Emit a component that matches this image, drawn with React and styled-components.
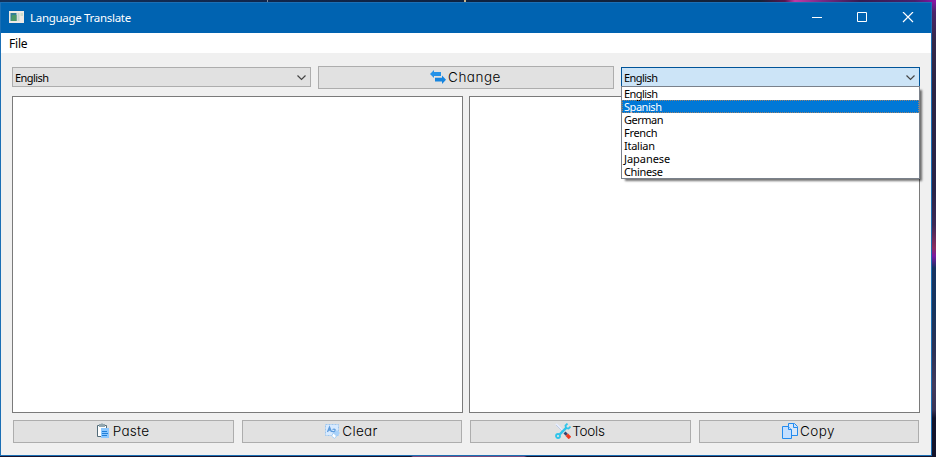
import React from "react";
import styled, { createGlobalStyle } from "styled-components";

const GlobalStyle = createGlobalStyle`
  *, *::before, *::after { box-sizing: border-box; }
  body { margin: 0; overflow: hidden; }
`;

const Desktop = styled.div`
  width: 936px;
  height: 457px;
  padding: 2px 4px 1px 0;
  background:
    linear-gradient(#c9b68a, #c9b68a) 464px 0 / 2px 2px no-repeat,
    linear-gradient(#7e8797, #7e8797) 267px 0 / 1px 2px no-repeat,
    linear-gradient(90deg, #12315b 0, #10264c 260px, #0e2240 480px, #142238 760px, #57154f 785px, #c23aa5 795px, #7a2a86 822px, #351b50 860px, #47206b 915px, #8c12a8 936px) 0 0 / 936px 2px no-repeat,
    linear-gradient(90deg, #17102a 0, #17102a 411px, #7a4878 413px, #7a4878 524px, #17102a 527px, #141127 936px) 0 456px / 936px 1px no-repeat,
    linear-gradient(#8d14ab 0, #4c246b 12px, #34294a 40px, #2b2444 90px, #282347 190px, #3d2855 225px, #8c2d60 248px, #7b19a2 256px, #173260 268px, #16345d 310px, #2b3155 350px, #413a5c 385px, #3a3456 410px, #12132b 418px, #15142b 457px) 932px 0 / 4px 457px no-repeat,
    #17102a;
`;

const Window = styled.main`
  width: 932px;
  height: 454px;
  display: flex;
  flex-direction: column;
  border: 1px solid #1b6fb5;
  background: #f0f0f0;
  color: #000;
`;

const TitleBar = styled.header`
  height: 30px;
  flex: none;
  display: flex;
  align-items: center;
  padding: 0 17px 0 8px;
  background: #0063b1;
  color: #fff;
  > svg { margin-bottom: 2px; }
`;

const Title = styled.h1`
  flex: 1;
  margin: 0 0 0 6px;
  font: 400 11.5px/16px "Noto Sans", sans-serif;
  letter-spacing: -0.3px;
`;

const WindowControls = styled.div`
  display: flex;
  gap: 34px;
`;

const ControlButton = styled.button`
  width: 12px;
  height: 12px;
  padding: 0;
  border: 0;
  background: none;
  color: inherit;
  svg { display: block; }
`;

const MenuBar = styled.nav`
  height: 20px;
  flex: none;
  padding: 0 8px;
  background: #fff;
  font: 400 12px/21px "Noto Sans", sans-serif;
  letter-spacing: -0.2px;
`;

const Content = styled.div`
  flex: 1;
  display: flex;
  flex-direction: column;
  padding: 13px 11px 12px;
`;

const LanguageRow = styled.div`
  display: grid;
  grid-template-columns: 299px 296px 299px;
  column-gap: 7px;
  align-items: start;
  height: 23px;
`;

const Combo = styled.div`
  position: relative;
  height: 20px;
  margin-top: 1px;
  display: flex;
  align-items: center;
  justify-content: space-between;
  padding: 0 4px 0 2px;
  border: 1px solid ${(p) => (p.$open ? "#005499" : "#adadad")};
  background: ${(p) => (p.$open ? "#cce4f7" : "#e1e1e1")};
  font: 400 11px/13px "Noto Sans", sans-serif;
  letter-spacing: -0.55px;
  > svg { margin-top: 2px; }
`;

const Options = styled.ul`
  position: absolute;
  z-index: 1;
  top: 18px;
  left: -1px;
  width: 299px;
  margin: 0;
  padding: 0;
  border: 1px solid #7a818b;
  background: #fff;
  box-shadow: 3px 3px 2px -1px rgba(0, 0, 0, 0.55);
  list-style: none;
`;

const Option = styled.li`
  height: 13px;
  padding-left: 2px;
  line-height: 13px;
  letter-spacing: ${(p) => p.$spacing}px;
  color: ${(p) => (p.$selected ? "#fff" : "#000")};
  background: ${(p) => (p.$selected ? "#0078d7" : "#fff")};
  outline: ${(p) => (p.$selected ? "1px dotted rgba(255, 135, 40, 0.6)" : "none")};
  outline-offset: -1px;
`;

const Panes = styled.div`
  flex: none;
  display: grid;
  grid-template-columns: 451px 451px;
  column-gap: 6px;
  height: 317px;
  margin-top: 7px;
`;

const TextPane = styled.textarea`
  display: block;
  width: 100%;
  height: 100%;
  border: 1px solid #7a7a7a;
  border-radius: 0;
  background: #fff;
  resize: none;
  outline: none;
`;

const Actions = styled.div`
  display: grid;
  grid-template-columns: 221px 220px 221px 220px;
  column-gap: 8px;
  margin: 7px 0 0 1px;
`;

const Button = styled.button`
  height: 23px;
  display: flex;
  align-items: center;
  justify-content: center;
  gap: ${(p) => p.$gap ?? 2}px;
  padding: 0 1px 1px 0;
  border: 1px solid #adadad;
  background: #e1e1e1;
  color: #000;
  font: 300 13.5px/20px Inter, sans-serif;
  font-feature-settings: "cv11";
  letter-spacing: ${(p) => p.$spacing ?? 0.25}px;
  svg { flex: none; }
`;

const AppIcon = () => (
  <svg width="15" height="12" viewBox="0 0 15 12">
    <path fill="#eee9e5" d="M0 0h15v12H0z" />
    <path fill="#327f96" d="M1.5 2h6v8h-6z" />
    <path fill="#4b9868" d="M3 4h4.5v6H2z" />
    <path fill="#c6d7d1" d="M8.5 2h2v8h-2z" />
    <path fill="#ccdccb" d="M11.5 2H14v3h-2.5z" />
  </svg>
);

const Chevron = () => (
  <svg width="9" height="6" viewBox="0 0 9 6" fill="none" stroke="#454545" strokeWidth="1.2">
    <path d="m.5.5 4 4 4-4" />
  </svg>
);

const SwapIcon = () => (
  <svg width="16" height="14" viewBox="0 0 16 14" fill="#2492e8">
    <path d="M4 0v2h7v4H4v2L0 4z" />
    <path fill="#1685df" d="M12 5.5v2.3H5v3.6h7V14l4-4.2z" />
  </svg>
);

const PasteIcon = () => (
  <svg width="12" height="16" viewBox="0 0 12 16">
    <path fill="#fff" stroke="#526b79" d="M.5 2.5h9v11h-9z" />
    <path fill="#91a5ae" d="M2 1h2l1-1 1 1h2v3H2z" />
    <path fill="#8dc8ff" d="M4 5h8v10H4z" />
    <path stroke="#2180d9" d="M5 8.5h5M5 10.5h6M5 12.5h5" />
  </svg>
);

const ClearIcon = () => (
  <svg width="15" height="15" viewBox="0 0 15 15" fill="none">
    <path fill="#d7eaff" stroke="#9bc5ef" strokeDasharray="2 1" d="M.5.5h13v11H.5z" />
    <path stroke="#5d9bdc" strokeWidth="1.3" d="m2.5 8 2-5 2 5M3.2 6h2.6M10 5v4M7.5 5.5q3-1.5 2.5 2-3 .8-2.5-.8" />
    <path fill="#a7d1fa" d="m12 6 3 3-4 4-4-3z" />
    <path fill="#fff" stroke="#a5cef5" d="m8.5 9 3 3-2 2.5L6.5 12z" />
  </svg>
);

const ToolsIcon = () => (
  <svg width="16" height="16" viewBox="0 0 16 16" fill="none">
    <path stroke="#e6edff" strokeWidth="2" d="m1 1 8 8" />
    <path stroke="#a4b7ce" strokeWidth=".6" d="m1 2 7 7" />
    <path stroke="#30c4ea" strokeWidth="2.4" d="m4.7 11.3 7-7" />
    <circle cx="3" cy="13" r="2" stroke="#30c4ea" strokeWidth="1.8" />
    <path stroke="#30c4ea" strokeWidth="1.8" d="m12.5.6-2 2 .5 2.5 2.5.5 2-2" />
    <path stroke="#34446e" strokeWidth="2.8" d="m9.5 9.5 2.3 2.3" />
    <path stroke="#ee3b20" strokeWidth="3.5" d="m11.8 11.8 3.2 3.2" />
  </svg>
);

const CopyIcon = () => (
  <svg width="16" height="16" viewBox="0 0 16 16" fill="#c4dfff" stroke="#238bee">
    <path fill="#d8e7f8" d="M6.5.5h6l3 3v9h-9z" />
    <path d="M11.5.5v4h4" />
    <path d="M.5 3.5h6l3 3v9h-9z" />
    <path d="M6.5 3.5v3h3" />
  </svg>
);

const languages = [
  ["English", -0.55],
  ["Spanish", -0.45],
  ["German", -0.5],
  ["French", -0.3],
  ["Italian", -0.25],
  ["Japanese", -0.05],
  ["Chinese", -0.35],
];

export default function App() {
  return (
    <>
      <GlobalStyle />
      <Desktop>
        <Window>
          <TitleBar>
            <AppIcon />
            <Title>Language Translate</Title>
            <WindowControls>
              <ControlButton aria-label="Minimize">
                <svg width="12" height="12" stroke="#fff"><path d="M2 5.5h10" /></svg>
              </ControlButton>
              <ControlButton aria-label="Maximize">
                <svg width="12" height="12" stroke="#fff" fill="none"><path d="M1.5.5h9v9h-9z" /></svg>
              </ControlButton>
              <ControlButton aria-label="Close">
                <svg width="12" height="12" stroke="#fff" strokeWidth="1.2"><path d="m1 0 10 10M11 0 1 10" /></svg>
              </ControlButton>
            </WindowControls>
          </TitleBar>
          <MenuBar>File</MenuBar>
          <Content>
            <LanguageRow>
              <Combo>English<Chevron /></Combo>
              <Button $spacing={0.5}><SwapIcon />Change</Button>
              <Combo $open>
                English<Chevron />
                <Options>
                  {languages.map(([name, spacing]) => (
                    <Option key={name} $spacing={spacing} $selected={name === "Spanish"}>{name}</Option>
                  ))}
                </Options>
              </Combo>
            </LanguageRow>
            <Panes>
              <TextPane aria-label="Source text" />
              <TextPane aria-label="Translated text" />
            </Panes>
            <Actions>
              <Button $gap={4}><PasteIcon />Paste</Button>
              <Button $spacing={0.35}><ClearIcon />Clear</Button>
              <Button $gap={1} $spacing={-0.2}><ToolsIcon />Tools</Button>
              <Button $spacing={0.45}><CopyIcon />Copy</Button>
            </Actions>
          </Content>
        </Window>
      </Desktop>
    </>
  );
}
